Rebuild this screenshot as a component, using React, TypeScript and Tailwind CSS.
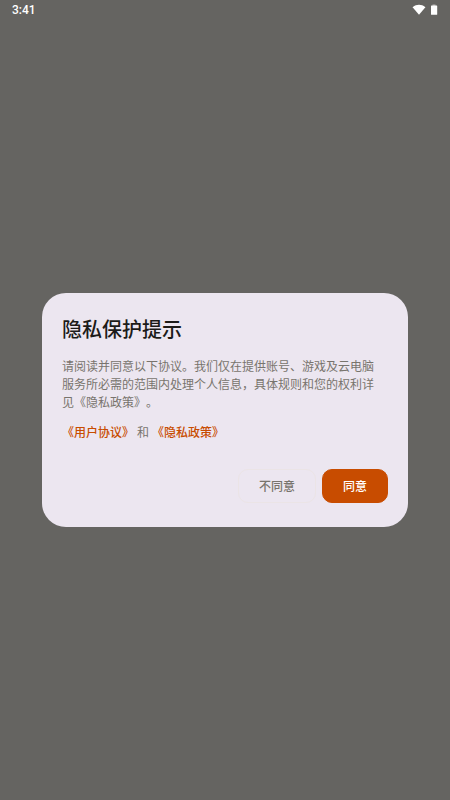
function WifiIcon() {
  return (
    <svg className="w-3.5 h-3" viewBox="0 0 14 12" fill="currentColor" aria-hidden="true">
      <path d="M7 10.8 0.8 3.5c-.1-.2 0-.4.1-.5C2.600 1.600 4.700 0.800 7 0.800s4.400.8 6.100 2.200c.1.1.2.3.1.5L7 10.800Z" />
    </svg>
  );
}

function BatteryIcon() {
  return (
    <svg className="w-2 h-3" viewBox="0 0 8 12" aria-hidden="true">
      <path d="M2.500 0.400h3v2h-3Z" fill="#a6a5a3" />
      <rect x="1" y="1.600" width="6.200" height="9.200" rx="0.500" fill="currentColor" />
    </svg>
  );
}

function StatusBar() {
  return (
    <header className="h-5 shrink-0 px-3 flex items-center justify-between text-white">
      <span className="font-['Roboto',sans-serif] text-[12px] leading-5 font-medium">3:41</span>
      <div className="flex items-center gap-1">
        <WifiIcon />
        <BatteryIcon />
      </div>
    </header>
  );
}

function PrivacyDialog() {
  return (
    <section
      role="dialog"
      aria-modal="true"
      aria-labelledby="privacy-title"
      className="w-full max-w-md rounded-3xl bg-[#ece6f0] px-5 pt-[22px] pb-6"
    >
      <h1 id="privacy-title" className="text-[20px] leading-7 font-medium text-[#1c1b19]">
        隐私保护提示
      </h1>
      <p className="mt-3.5 pr-3 text-[12px] leading-[18px] text-[#78746d]">
        请阅读并同意以下协议。我们仅在提供账号、游戏及云电脑服务所必需的范围内处理个人信息，具体规则和您的权利详见《隐私政策》。
      </p>
      <p className="mt-3 flex gap-[3px] text-[12px] leading-[18px] text-[#78746d]">
        <a href="#terms" className="font-medium text-[#c84c00]">《用户协议》</a>
        <span>和</span>
        <a href="#privacy" className="font-medium text-[#c84c00]">《隐私政策》</a>
      </p>
      <div className="mt-7 flex justify-end gap-1.5 text-[12px] leading-4 font-medium">
        <button type="button" className="h-[34px] px-5 rounded-[10px] border border-[#ebe4e6] text-[#78746d]">
          不同意
        </button>
        <button type="button" className="h-[34px] px-5 rounded-[10px] border border-[#c84c00] bg-[#c84c00] text-white">
          同意
        </button>
      </div>
    </section>
  );
}

export default function App() {
  return (
    <div
      lang="zh-CN"
      className="min-h-screen flex flex-col bg-[#656461] font-['Noto_Sans_CJK_SC',sans-serif] [text-spacing-trim:space-all]"
    >
      <StatusBar />
      <main className="flex-1 flex items-center justify-center px-[42px]">
        <PrivacyDialog />
      </main>
    </div>
  );
}
